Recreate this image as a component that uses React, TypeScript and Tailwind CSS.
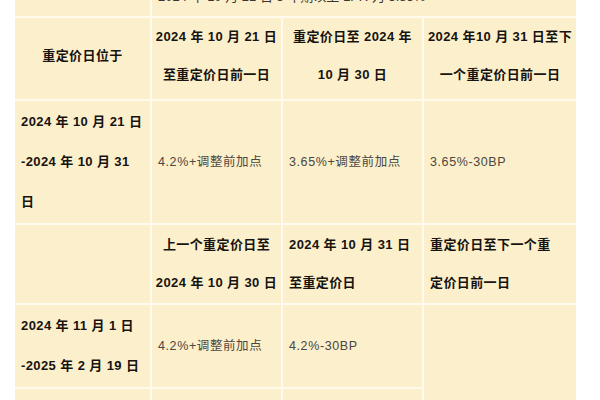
import React from 'react';

const font = "font-['Liberation_Sans','Noto_Sans_CJK_SC',sans-serif]";

function Head({ children, className = '' }: { children: React.ReactNode; className?: string }) {
  return (
    <div
      className={`bg-[#fcefcb] flex flex-col justify-center px-[6px] text-[13px] font-bold text-[#161310] leading-[38px] whitespace-nowrap tracking-[0.4px] ${className}`}
    >
      {children}
    </div>
  );
}

function Val({ children }: { children?: React.ReactNode }) {
  return (
    <div className="bg-[#fcefcb] flex items-center px-[6px] text-[12.5px] text-[#4a4640] tracking-[0.6px] whitespace-nowrap">
      {children}
    </div>
  );
}

export default function App() {
  return (
    <div className={`w-[600px] h-[400px] overflow-hidden bg-white ${font}`}>
      <div className="ml-[15px] -mt-[22px] w-[561px] bg-[#fffaec] grid grid-cols-[135px_129px_139px_152px] grid-rows-[38px_81px_122px_78px_82px_80px] gap-[2px]">
        {/* partial top row */}
        <div className="bg-[#fcefcb]" />
        <div className="col-span-3 bg-[#fcefcb] flex items-center px-[6px] text-[13px] text-[#3a3630] whitespace-nowrap">
          2024 年 10 月 21 日 5 年期以上 LPR 为 3.85%
        </div>

        {/* header row */}
        <Head className="items-center pb-[5px]">重定价日位于</Head>
        <Head className="items-center pb-[5px]">
          <span>2024 年 10 月 21 日</span>
          <span>至重定价日前一日</span>
        </Head>
        <Head className="items-center pb-[5px]">
          <span>重定价日至 2024 年</span>
          <span>10 月 30 日</span>
        </Head>
        <Head className="items-center pb-[5px]">
          <span>2024 年10 月 31 日至下</span>
          <span>一个重定价日前一日</span>
        </Head>

        {/* row 2 */}
        <Head className="leading-[40px]">
          <span>2024 年 10 月 21 日</span>
          <span>-2024 年 10 月 31</span>
          <span>日</span>
        </Head>
        <Val>4.2%+调整前加点</Val>
        <Val>3.65%+调整前加点</Val>
        <Val>3.65%-30BP</Val>

        {/* row 3 */}
        <div className="bg-[#fcefcb]" />
        <Head className="items-center">
          <span>上一个重定价日至</span>
          <span>2024 年 10 月 30 日</span>
        </Head>
        <Head>
          <span>2024 年 10 月 31 日</span>
          <span>至重定价日</span>
        </Head>
        <Head>
          <span>重定价日至下一个重</span>
          <span>定价日前一日</span>
        </Head>

        {/* row 4 */}
        <Head className="leading-[40px]">
          <span>2024 年 11 月 1 日</span>
          <span>-2025 年 2 月 19 日</span>
        </Head>
        <Val>4.2%+调整前加点</Val>
        <Val>4.2%-30BP</Val>
        <div className="row-span-2 bg-[#fcefcb]" />

        {/* row 5 (cut off) */}
        <div className="bg-[#fcefcb] px-[6px] pt-[5px] text-[13px] font-bold text-[#161310] leading-[36px] whitespace-nowrap tracking-[0.4px]">
          <span>2025 年 2 月 20 日</span>
        </div>
        <div className="bg-[#fcefcb]" />
        <div className="bg-[#fcefcb]" />
      </div>
    </div>
  );
}
